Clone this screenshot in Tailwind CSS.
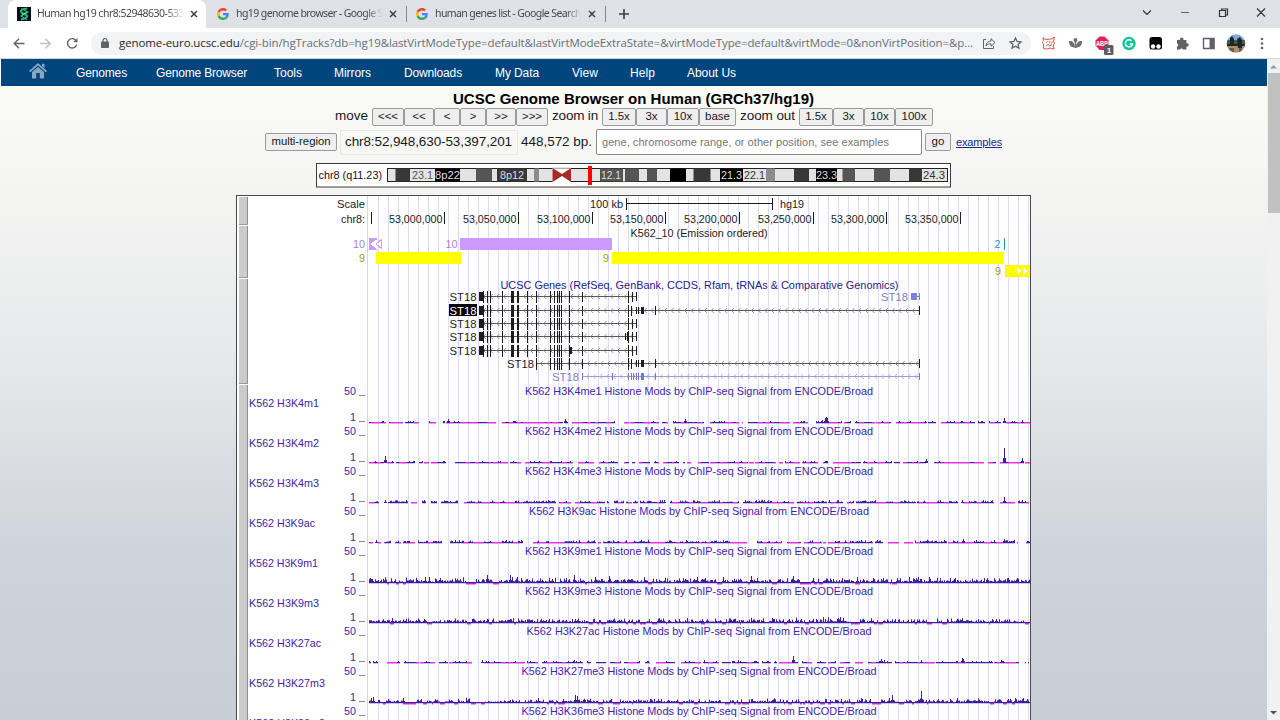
<!DOCTYPE html>
<html lang="en">
<head>
<meta charset="utf-8">
<title>Human hg19 chr8:52948630-53397201 UCSC Genome Browser</title>
<script src="https://cdn.jsdelivr.net/npm/@tailwindcss/browser@4"></script>
</head>
<body class="w-[1280px] h-[720px] overflow-hidden bg-white font-['Liberation_Sans',sans-serif] text-black">
<svg class="hidden">
  <defs>
    <symbol id="g" viewBox="0 0 48 48"><path fill="#EA4335" d="M24 9.5c3.54 0 6.71 1.22 9.21 3.6l6.85-6.85C35.9 2.38 30.47 0 24 0 14.62 0 6.51 5.38 2.56 13.22l7.98 6.19C12.43 13.72 17.74 9.5 24 9.5z"/><path fill="#4285F4" d="M46.98 24.55c0-1.57-.15-3.09-.38-4.55H24v9.02h12.94c-.58 2.96-2.26 5.48-4.78 7.18l7.73 6c4.51-4.18 7.09-10.36 7.09-17.65z"/><path fill="#FBBC05" d="M10.53 28.59c-.48-1.45-.76-2.99-.76-4.59s.27-3.14.76-4.59l-7.98-6.19C.92 16.46 0 20.12 0 24c0 3.88.92 7.54 2.56 10.78l7.97-6.19z"/><path fill="#34A853" d="M24 48c6.48 0 11.93-2.13 15.89-5.81l-7.73-6c-2.15 1.45-4.92 2.3-8.16 2.3-6.26 0-11.57-4.22-13.47-9.91l-7.98 6.19C6.51 42.62 14.62 48 24 48z"/></symbol>
    <symbol id="x" viewBox="0 0 8 8"><path d="M1 1l6 6M7 1l-6 6" stroke="#3c4043" stroke-width="1.5" fill="none"/></symbol>
  </defs>
</svg>
<div class="flex flex-col w-full h-full">
  <!-- tab strip -->
  <div class="flex items-center h-7 shrink-0 bg-[#dee1e6] text-[10.500px] text-[#45484c] font-['Noto_Sans','Open_Sans',sans-serif] whitespace-nowrap">
    <div class="flex items-center h-7 w-[198px] ml-2 bg-white rounded-tr-lg rounded-tl-lg">
      <svg class="w-[14px] h-[14px] ml-[9px] shrink-0" viewBox="0 0 14 14"><rect width="14" height="14" fill="#0a0d12"/><path d="M10 1.500C2 2.500 3 5.500 7 7s5 4-3 5.500" stroke="#19c46b" stroke-width="2" fill="none"/><path d="M4 1.500l7 3.500-7 4 6 3.500" stroke="#2fa0c0" stroke-width="1.200" fill="none"/><path d="M5 8l5-3" stroke="#7be36a" stroke-width="1.300"/></svg>
      <div data-fit class="shrink-0 w-[147px] ml-[6px] [mask-image:linear-gradient(90deg,#000_88%,transparent)]">Human hg19 chr8:52948630-533</div>
      <svg class="w-2 h-2 ml-[6px]"><use href="#x"/></svg>
    </div>
    <svg class="w-3 h-3 ml-[11px]"><use href="#g"/></svg>
    <div data-fit class="shrink-0 w-[147px] ml-[7px] [mask-image:linear-gradient(90deg,#000_88%,transparent)]">hg19 genome browser - Google S</div>
    <svg class="w-2 h-2 ml-[6px]"><use href="#x"/></svg>
    <div class="w-px h-4 ml-[9px] bg-[#85888c]"></div>
    <svg class="w-3 h-3 ml-[9px]"><use href="#g"/></svg>
    <div data-fit class="shrink-0 w-[146px] ml-[7px] [mask-image:linear-gradient(90deg,#000_90%,transparent)]">human genes list - Google Search</div>
    <svg class="w-2 h-2 ml-[7px]"><use href="#x"/></svg>
    <div class="w-px h-4 ml-[9px] bg-[#85888c]"></div>
    <svg class="w-[10px] h-[10px] ml-[13px]" viewBox="0 0 10 10"><path d="M5 0v10M0 5h10" stroke="#3c4043" stroke-width="1.600"/></svg>
    <svg class="w-[130px] h-6 ml-auto mr-2" viewBox="1142 0 130 24" fill="none" stroke="#333"><path d="M1143 8.500l4 4 4-4M1257 6.500l8 8m0-8l-8 8" stroke-width="1.100"/><path d="M1181 10.500h8" stroke="#666"/><path d="M1219.500 8.500h6v6h-6zM1221.500 8.500v-1.500h6v6H1226" stroke-width="1.200"/></svg>
  </div>
  <!-- toolbar -->
  <div class="flex items-center h-[31px] shrink-0 bg-white border-b border-[#d5d8dc]">
    <svg class="w-[66px] h-5 ml-3 shrink-0" viewBox="12 33 66 20" fill="none" stroke="#5f6368" stroke-width="1.400"><path d="M24.500 43.500H14.500m4.500-4.700l-4.700 4.700 4.700 4.700"/><path d="M40 43.500h10m-4.500-4.700l4.700 4.700-4.700 4.700" stroke="#bdc1c6"/><path d="M76 40.500a4.700 4.700 0 1 0 .7 4.200" /><path d="M77.500 38v4.300h-4.300z" fill="#5f6368" stroke="none"/></svg>
    <div class="flex items-center h-[23px] w-[940px] ml-[13px] rounded-full bg-[#f1f3f4] shrink-0">
      <svg class="w-2 h-[10px] ml-[10px] shrink-0" viewBox="0 0 8 10"><rect y="3.500" width="8" height="6.500" rx="1" fill="#5f6368"/><path d="M2 4V2.500a2 2 0 0 1 4 0V4" stroke="#5f6368" stroke-width="1.200" fill="none"/></svg>
      <div data-fit class="shrink-0 w-[854px] ml-[10px] text-[11.500px] leading-none text-[#6b6f74] whitespace-nowrap font-['Open_Sans','Noto_Sans',sans-serif]"><span class="text-[#26292c]">genome-euro.ucsc.edu</span>/cgi-bin/hgTracks?db=hg19&amp;lastVirtModeType=default&amp;lastVirtModeExtraState=&amp;virtModeType=default&amp;virtMode=0&amp;nonVirtPosition=&amp;p...</div>
      <svg class="w-[42px] h-4 ml-[9px] shrink-0" viewBox="982 35 42 16" fill="none" stroke="#5f6368"><path d="M986 39.500h-2.500v9h10V46M986 46c.3-3.300 2.300-5 5-5v-2.300l4 3.800-4 3.700v-2.400c-2.200 0-3.800.6-5 2.200z"/><path d="M1015.500 38l1.600 3.500 3.800.4-2.900 2.500.9 3.800-3.400-2-3.400 2 .9-3.800-2.900-2.500 3.800-.4z" stroke-width="1.300"/></svg>
    </div>
    <svg class="w-[232px] h-[30px] ml-[8px] shrink-0" viewBox="1039 28 232 30">
      <g fill="none" stroke="#dc5450" stroke-width="1"><path d="M1043 37.500l2.500 2 5.500-.5 3.500-2-1 4 1 2-1 2 .5 4-4-1-3 1-3.500-.5v-4l-1-2 1-2z"/><path d="M1046 43l1.500-1.500m2 1.500l.5-2m1.500 2.500l1-2M1046.500 45.500l2-1 1 1.500 2.500-1.500"/></g>
      <g fill="#696c70"><path d="M1069 41c3-.5 5.500 1 6 6.500-3.700 0-6-2-6-6.500zM1082 41c-3-.5-5.500 1-6 6.500 3.700 0 6-2 6-6.500z"/><circle cx="1075.500" cy="40" r="1.900"/><path d="M1074.700 41h1.600v7h-1.600z"/></g>
      <path d="M1099.500 36.500h5l4 4v5l-4 4.500h-5l-4-4.500v-5z" fill="#e4204d"/>
      <text x="1096" y="46" font-size="7" font-weight="700" fill="#fff" textLength="12" lengthAdjust="spacingAndGlyphs" font-family="Liberation Sans">ABP</text>
      <rect x="1104" y="45" width="9.500" height="10" rx="1.500" fill="#5a5d60"/><text x="1106.700" y="53" font-size="8" font-weight="700" fill="#fff" font-family="Liberation Sans">1</text>
      <circle cx="1129" cy="43.500" r="6.700" fill="#15c39a"/><path d="M1131.500 40.800a3.600 3.600 0 1 0 1 3.200h-2.800" stroke="#fff" stroke-width="1.400" fill="none"/>
      <rect x="1149.500" y="37" width="12.500" height="12.500" rx="2.500" fill="#050505"/><circle cx="1153" cy="46.500" r="2.200" fill="#fff"/><circle cx="1158.500" cy="46.500" r="2.200" fill="#fff"/>
      <path d="M1177 40h3a1.800 1.800 0 1 1 3.400 0h3v3.200a1.800 1.800 0 1 1 0 3.400v3h-3.200a1.800 1.800 0 0 0-3.400 0H1177v-3a1.800 1.800 0 0 0 0-3.400z" fill="#5f6368"/>
      <path d="M1203.500 38.500h10.500v10h-10.500z" fill="none" stroke="#5f6368" stroke-width="1.400"/><path d="M1209.500 38h5v11h-5z" fill="#5f6368"/>
      <clipPath id="av"><circle cx="1236" cy="43.500" r="9.300"/></clipPath>
      <g clip-path="url(#av)"><path fill="#7fa9d8" d="M1226 34h20v8h-20z"/><path fill="#465b4d" d="M1226 40h20v7h-20z"/><path fill="#a98e6e" d="M1226 46h20v8h-20z"/><path fill="#20252b" d="M1230 38l2-2 2 3v7h-4zM1237 39l3-2 2 3v8h-4zM1227 44h17v2h-17z"/><path fill="#735c46" d="M1229 48h5v5h-5zM1239 48h3v5h-3z"/></g>
      <g fill="#5f6368"><circle cx="1262" cy="39" r="1.300"/><circle cx="1262" cy="43.500" r="1.300"/><circle cx="1262" cy="48" r="1.300"/></g>
    </svg>
  </div>
  <div class="flex h-[661px]">
    <div class="flex flex-col items-start shrink-0 w-[1267px] pl-px bg-[linear-gradient(180deg,#fafaf7_0px,#fafaf7_40px,#f3f3f2_150px,#e3e6e8_330px,#cfd4db_490px,#c8cdd6_661px)]">
      <nav class="flex items-center w-full h-[27px] pt-px shrink-0 bg-[#00457c] text-white text-[12px] whitespace-nowrap">
        <svg class="w-[18px] h-4 ml-7 -mt-1 shrink-0" viewBox="0 0 18 16" fill="#86a6c4"><path d="M9 0l9 8-1.300 1.300L9 2.500 1.300 9.300 0 8zM13 .8h2.500V5L13 3z"/><path d="M3 9l6-5 6 5v6.500h-4.200V10H7.200v5.500H3z"/></svg>
        <span data-fit class="shrink-0 w-[51px] ml-[29px]">Genomes</span>
        <span data-fit class="shrink-0 w-[91px] ml-[29px]">Genome Browser</span>
        <span data-fit class="shrink-0 w-[28px] ml-[27px]">Tools</span>
        <span data-fit class="shrink-0 w-[37px] ml-[32px]">Mirrors</span>
        <span data-fit class="shrink-0 w-[58px] ml-[33px]">Downloads</span>
        <span data-fit class="shrink-0 w-[44px] ml-[33px]">My Data</span>
        <span data-fit class="shrink-0 w-[26px] ml-[33px]">View</span>
        <span data-fit class="shrink-0 w-[25px] ml-[32px]">Help</span>
        <span data-fit class="shrink-0 w-[49px] ml-[32px]">About Us</span>
      </nav>
      <h1 data-fit class="w-[361px] ml-[452px] mt-[4px] h-[18px] leading-[18px] text-[15px] font-bold whitespace-nowrap">UCSC Genome Browser on Human (GRCh37/hg19)</h1>
      <!-- move and zoom controls -->
      <div class="flex items-center h-[17px] ml-[334px] text-[13.500px] text-[#1a1a1a] whitespace-nowrap [&_button]:h-[18px] [&_button]:text-[11.500px] [&_button]:leading-none [&_button]:border [&_button]:border-[#9a9a9a] [&_button]:rounded-[2px] [&_button]:bg-[#efefef]">
        <span data-fit class="w-[33px]">move</span>
        <div class="flex ml-[4px]"><button class="w-[32px]">&lt;&lt;&lt;</button><button class="w-[30px]">&lt;&lt;</button><button class="w-[26px]">&lt;</button><button class="w-[26px]">&gt;</button><button class="w-[30px]">&gt;&gt;</button><button class="w-[32px]">&gt;&gt;&gt;</button></div>
        <span data-fit class="w-[46px] ml-[4px]">zoom in</span>
        <div class="flex ml-[4px]"><button class="w-[34px]">1.5x</button><button class="w-[31px]">3x</button><button class="w-[32px]">10x</button><button class="w-[37px]">base</button></div>
        <span data-fit class="w-[55px] ml-[4px]">zoom out</span>
        <div class="flex ml-[4px]"><button class="w-[34px]">1.5x</button><button class="w-[31px]">3x</button><button class="w-[31px]">10x</button><button class="w-[38px]">100x</button></div>
      </div>
      <!-- position row -->
      <div class="flex items-center h-[26px] mt-[4px] ml-[264px] text-[13.500px] text-[#1a1a1a] whitespace-nowrap">
        <button class="shrink-0 w-[72px] h-[18px] px-0 text-[11.300px] leading-none border border-[#9a9a9a] rounded-[2px] bg-[#efefef]">multi-region</button>
        <div class="flex items-center shrink-0 w-[178px] h-[25px] ml-[3px] pl-[4px] border border-[#e8e8e6]"><span data-fit class="w-[167px]">chr8:52,948,630-53,397,201</span></div>
        <span data-fit class="w-[71px] ml-[3px]">448,572 bp.</span>
        <div class="flex items-center shrink-0 w-[326px] h-[26px] ml-[4px] pl-[5px] pt-px border border-[#8a8a8a] rounded-[2px] bg-white text-[11px] text-[#757575]"><span data-fit class="w-[287px]">gene, chromosome range, or other position, see examples</span></div>
        <button class="shrink-0 w-[26px] h-[18px] ml-[3px] text-[11.500px] leading-none border border-[#9a9a9a] rounded-[2px] bg-[#efefef]">go</button>
        <a data-fit class="w-[46px] ml-[5px] pt-px text-[11px] text-[#1a2a8c] underline">examples</a>
      </div>
      <svg id="ideo" class="block shrink-0 w-[636px] h-[25px] mt-[8px] ml-[315px]" viewBox="316 163 636 25"></svg>
      <svg id="tracks" class="block w-[796px] h-[526px] mt-[7px] ml-[235px] shrink-0" viewBox="236 195 796 526" shape-rendering="crispEdges"></svg>
    </div>
    <!-- scrollbar -->
    <div class="flex flex-col items-center w-[13px] bg-[#f1f1f1]">
      <svg class="w-[13px] h-[14px]" viewBox="0 0 13 14"><path d="M3 9.500h7L6.500 6z" fill="#9a9a9a"/></svg>
      <div class="w-[12px] h-[140px] bg-[#c1c1c1]"></div>
      <svg class="w-[13px] h-[14px] mt-auto" viewBox="0 0 13 14"><path d="M3 5h7L6.500 8.500z" fill="#505050"/></svg>
    </div>
  </div>
</div>
<script>
// Spread each label over the width of its box, once styles are in force.
function fit() {
  document.querySelectorAll('[data-fit]').forEach(e => {
    e.style.letterSpacing = '0px';
    const r = document.createRange(); r.selectNodeContents(e);
    const gap = (e.clientWidth - r.getBoundingClientRect().width) / e.textContent.length;
    e.style.letterSpacing = Math.abs(gap) < 2 ? gap + 'px' : '0px';
  });
}
window.addEventListener('load', () => { fit(); requestAnimationFrame(fit); setTimeout(fit, 60); });
const rect = (x, y, w, h, f) => `<rect x="${x}" y="${y}" width="${w}" height="${h}" fill="${f}"/>`;
const text = (s, x, y, w, f, z = 11) => `<text x="${x}" y="${y}" font-size="${z}" textLength="${w}" lengthAdjust="spacingAndGlyphs" fill="${f}">${s}</text>`;

// chromosome ideogram
const L = '#e3e3e3', D = '#383838', M = '#555', G = '#8c8c8c', K = '#000';
let o = rect(316.5, 163.500, 634, 23.500, '#fff" stroke="#3b3b3b');
o += rect(387.500, 168.500, 560, 13, L + '" stroke="#222');
[[395.500,14.500,D],[435,25,K],[476,16,M],[497,30,D],[534,5,G],[600,23,M],[625,14,M],[647,10,M],[670,16,K],[693.500,17,D],[720,23,K],[766,9,G],[794,15,D],[816,21,K],[842.500,12.500,M],[874,16,M],[909,13,D]].forEach(b => o += rect(b[0], 168.500, b[1], 13, b[2]));
o += rect(552.500, 168, 18.500, 14, '#fff') + '<path d="M552.500 168L562 174l9-6v14l-9-6-9.500 6z" fill="#a52a2a"/>';
o += rect(552.500, 167.800, 18.500, .8, '#777') + rect(588, 166, 4, 19, '#ff0000') + rect(623,169,2,12.500,L);
o += text('chr8 (q11.23)', 318.500, 179, 63.500, '#111');
[['23.1',412,21,'#555'],['8p22',435,25,'#ddd'],['8p12',500,24,'#ddd'],['12.1',601,20,'#ddd'],['21.3',721,21,'#ddd'],['22.1',744,21,'#333'],['23.3',816,21,'#ddd'],['24.3',923,22,'#333']].forEach(t => o += text(t[0], t[1], 179, t[2], t[3]));
document.getElementById('ideo').innerHTML = o;

// track image
const BK = '#1c1c1c', P = '#4322a8';
o = rect(236.500, 195.500, 794, 540, '#fff" stroke="#4a4a4a');
[[197,27],[226,51],[279,104],[385,336]].forEach(b => o += rect(239, b[0], 8, b[1], '#cbcbcb') + rect(247,b[0],1,b[1],'#8f8f8f') + rect(239,b[0]+b[1],9,1,'#9a9a9a'));
for (let x = 378; x < 1030; x += 10) o += rect(x, 196, 1, 525, '#dcdcfa');
o += rect(367, 196, 1, 525, '#ffc8c8');
o += text('Scale', 337, 208, 28, BK) + text('chr8:', 341, 222.500, 24, BK) + text('100 kb', 590, 207.500, 33, BK) + text('hg19', 780, 207.500, 24, BK);
o += rect(626, 203, 147, 1, BK) + rect(626, 198, 1, 12, BK) + rect(772, 198, 1, 12, BK);
[371,444,518,592,665,739,813,886,960].forEach((x, i) => {
  o += rect(x, 212, 1, 12, BK);
  if (i) o += text('53,' + String((i - 1) * 50).padStart(3, '0') + ',000', x - 55, 222.500, 53.500, BK);
});
o += text('K562_10 (Emission ordered)', 630.500, 236.500, 137, BK);
// chromatin state segments
const V = '#cc99ff', Y = '#ffff00';
o += rect(369,238,8,12,V) + '<path d="M376.500 239.500l-6 4.500 6 4.500z" fill="#fff"/><path d="M381.500 239.500l-5.500 4.500 5.500 4.500z" fill="#fff" stroke="#cc99ff"/>';
o += rect(460,238,152,12,V) + rect(376,252,85,12,Y) + rect(612,252,392,12,Y) + rect(1005,265,25,12,Y);
o += '<path d="M1017 267l5 4-5 4zM1023 267l5 4-5 4z" fill="#fff"/>' + rect(1004,238,1,12,'#2a93bd');
o += text('10',353,248,12,'#a67fd0') + text('10',445.500,248,12,'#a67fd0') + text('9',359,262,6,'#a0a000') + text('9',603,262,6,'#a0a000') + text('9',995,275,6,'#a0a000') + text('2',994.500,248,6,'#2f9cc8');
// genes
const GP = '#7878c8';
o += text('UCSC Genes (RefSeq, GenBank, CCDS, Rfam, tRNAs &amp; Comparative Genomics)', 500.500, 289, 398, '#22228c');
function gene(y, x0, x1, color, ticks) {
  o += rect(x0, y, x1 - x0, 1, color === BK ? '#555' : '#9c9cdc');
  let d = '';
  for (let x = x0 + 5; x < x1 - 3; x += 6.700) d += `M${x + 2} ${y - 2}l-2.500 2.500 2.500 2.500`;
  o += `<path d="${d}" fill="none" stroke="${color === BK ? '#777' : '#9c9cdc'}" stroke-width=".8" shape-rendering="auto"/>`;
  ticks.forEach(t => o += rect(t[0], y - t[2] + (t[2] > 4 ? 1 : 0), t[1], t[2] * 2 + (t[2] > 4 ? 0 : 1), color));
}
const ex = [[479,4,4],[483,1,6],[487,1,6],[490,1,6],[502,1,6],[511,3,6],[517,2,6],[527,1,6]], mid = [[536,1,6],[550,1,6],[554,1,6],[557,1,6],[559,1,6],[561,1,6],[569,1,6],[582,1,5]];
const end = [[628,1,6],[632,1,5],[636,1,4]], far = [[628,1,6],[631,1,5],[636,1,3],[638,1,3],[641,3,3],[655,1,4],[919,1,4]];
[296,310,323,336,350].forEach((y, i) => {
  gene(y, 479, i === 1 ? 920 : 637, BK, ex.concat(mid, i === 1 ? far : end, i === 3 ? [[625,1,3],[627,1,4]] : [], i === 4 ? [[570,2,3]] : []));
  if (i === 1) o += rect(449, 304, 28, 12, '#000');
  o += text('ST18', 449.500, y + 4.500, 27, i === 1 ? '#fff' : BK);
});
gene(363, 536, 920, BK, mid.concat(far));
gene(376, 582, 920, GP, [[582,1,3],[612,1,3],[628,1,3],[631,1,3],[633,1,3],[636,1,3],[638,1,3],[641,3,3],[655,1,3],[919,1,3]]);
o += text('ST18', 507, 367.500, 27, BK) + text('ST18', 552, 381, 27, '#8080c0') + text('ST18', 881, 301, 27, '#8080c0');
o += rect(911,293,6,7,'#8080dd') + rect(917,296,3,1,'#8080dd') + rect(919,293,1,7,'#8080dd');
// histone signal tracks: [short label, label width, name, title width, density, peaks]
let seed = 17;
const rnd = () => (seed = (seed * 16807) % 2147483647) / 2147483647;
[['H3K4m1',70,'H3K4me1',348,0,[[448,4],[565,4],[685,4],[822,3],[825,5],[826,6],[827,5],[899,2],[925,2],[962,2],[1004,5],[1022,3]]],
 ['H3K4m2',70,'H3K4me2',348,0,[[375,2],[385,7],[539,2],[825,2],[926,4],[939,2],[1004,15],[1005,3],[1022,5]]],
 ['H3K4m3',70,'H3K4me3',348,.25,[[385,3],[424,3],[660,3],[664,3],[764,3],[829,3],[838,3],[940,3],[962,3],[1004,6],[1022,3]]],
 ['H3K9ac',66,'H3K9ac',340,.3,[[376,3],[579,3],[686,3],[877,3],[963,4],[994,3],[1004,4]]],
 ['H3K9m1',69,'H3K9me1',348,1,[[370,5],[372,4],[425,6],[429,6],[440,5],[487,8],[510,8],[512,6],[517,6],[540,4],[574,8],[595,6],[609,7],[697,6],[723,6],[751,7],[757,5],[793,7],[813,5],[857,6],[873,5],[897,5],[918,6],[1017,5]]],
 ['H3K9m3',70,'H3K9me3',348,.85,[[392,5],[424,4],[487,4],[510,4],[575,4],[702,4],[773,4],[838,5],[840,6],[843,5],[962,5],[996,4]]],
 ['H3K27ac',72,'H3K27ac',345,0,[[398,2],[482,3],[574,3],[704,3],[738,3],[793,7],[881,4],[884,3],[921,3],[962,5],[963,4],[1001,3]]],
 ['H3K27m3',76,'H3K27me3',355,.7,[[371,5],[373,6],[388,4],[403,5],[538,5],[563,4],[575,8],[577,7],[658,4],[752,4],[830,3],[861,5],[889,5],[892,8],[921,12],[938,4],[1015,5],[1023,5]]],
 ['H3K36m3',76,'H3K36me3',355,0,[]]
].forEach((t, i) => {
  const y = 395 + 40 * i, b = y + 28;
  o += text('K562 ' + t[2] + ' Histone Mods by ChIP-seq Signal from ENCODE/Broad', 699 - t[3] / 2, y, t[3], P);
  o += text('50', 344, y - .5, 12, P) + rect(359, y, 6, 1, '#8a78cc') + text('1', 350, y + 26, 6, P) + rect(359, y + 26, 6, 1, '#8a78cc') + text('K562 ' + t[0], 249, y + 12.400, t[1], P);
  if (b > 718) return;
  let dark = '', pink = '';
  const dense = t[4] >= .7;
  for (let x = 369; x < 1030;) {
    const r = rnd(), n = Math.min(1030 - x, 1 + Math.floor(rnd() * 5));
    const kind = r < .4 + t[4] * .48 ? 1 : r < .84 + t[4] * .15 ? 2 : 0;
    if (dense) dark += `M${x} ${b - 1}h${n}v1.200h-${n}z`;
    if (kind === 2) pink += `M${x} ${dense ? b : b - .9}h${n}v1.500h-${n}z`;
    if (kind === 1) {
      dark += `M${x} ${b - 1}h${n}v1.300h-${n}z`;
      for (let k = 0; k < n; k++) { const h = (rnd() < .2 ? 2 : 1) + rnd() * rnd() * t[4] * 5; dark += `M${x + k} ${b - h}h1v${h}h-1z`; }
    }
    x += n;
  }
  t[5].forEach(p => dark += `M${p[0]} ${b - p[1]}h1v${p[1]}h-1zM${p[0] - 1} ${b - Math.ceil(p[1] / 3)}h3v${Math.ceil(p[1] / 3)}h-3z`);
  o += `<path d="${pink}" fill="#e62fe6" shape-rendering="auto"/><path d="${dark}" fill="#3c1f9c" shape-rendering="auto"/>`;
});
document.getElementById('tracks').innerHTML = o;
</script>
</body>
</html>
